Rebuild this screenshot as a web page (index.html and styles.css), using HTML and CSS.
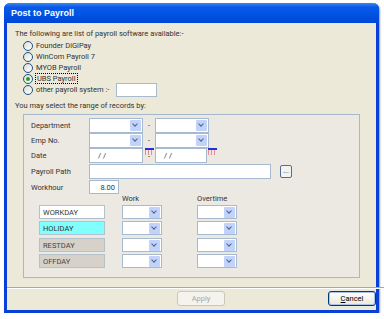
FILE: index.html
```html
<!DOCTYPE html>
<html lang="en">
<head>
  <meta charset="UTF-8" />
  <title>Post to Payroll</title>
  <link rel="stylesheet" href="styles.css">
</head>
<body>
<div class="window">
  <div class="titlebar">Post to Payroll</div>
  <div class="content">
    <div class="line">The following are list of payroll software available:-</div>
    <div class="radios">
      <label class="radio"><span class="dot"></span>Founder DiGiPay</label>
      <label class="radio"><span class="dot"></span>WinCom Payroll 7</label>
      <label class="radio"><span class="dot"></span>MYOB Payroll</label>
      <label class="radio"><span class="dot checked"></span><span class="focus">UBS Payroll</span></label>
      <label class="radio"><span class="dot"></span>other payroll system :-<span class="box other-box"></span></label>
    </div>
    <div class="line range">You may select the range of records by:</div>

    <div class="panel">
      <div class="row r1">
        <span class="lbl">Department</span>
        <span class="combo"><span class="drop"></span></span>
        <span class="dash">-</span>
        <span class="combo"><span class="drop"></span></span>
      </div>
      <div class="row r2">
        <span class="lbl">Emp No.</span>
        <span class="combo"><span class="drop"></span></span>
        <span class="dash">-</span>
        <span class="combo"><span class="drop"></span></span>
      </div>
      <div class="row r3">
        <span class="lbl">Date</span>
        <span class="box date">/ /</span>
        <span class="dash cal-dash"><span class="cal"></span>-</span>
        <span class="box date date2">/ /</span>
        <span class="cal"></span>
      </div>
      <div class="row r4">
        <span class="lbl">Payroll Path</span>
        <span class="box path"></span>
        <span class="browse">...</span>
      </div>
      <div class="row r5">
        <span class="lbl">Workhour</span>
        <span class="box hours">8.00</span>
      </div>

      <div class="days">
        <span></span><span class="head">Work</span><span class="head">Overtime</span>
        <span class="box day">WORKDAY</span>
        <span class="combo small"><span class="drop"></span></span>
        <span class="combo small"><span class="drop"></span></span>
        <span class="box day holiday">HOLIDAY</span>
        <span class="combo small"><span class="drop"></span></span>
        <span class="combo small"><span class="drop"></span></span>
        <span class="box day grey">RESTDAY</span>
        <span class="combo small"><span class="drop"></span></span>
        <span class="combo small"><span class="drop"></span></span>
        <span class="box day grey">OFFDAY</span>
        <span class="combo small"><span class="drop"></span></span>
        <span class="combo small"><span class="drop"></span></span>
      </div>
    </div>

    <div class="footer">
      <button class="btn apply" disabled>Apply</button>
      <button class="btn cancel"><u>C</u>ancel</button>
    </div>
  </div>
</div>
</body>
</html>
```

FILE: styles.css
```css
body {
  margin: 0;
  background: #fff;
  font-family: Roboto, "Liberation Sans", Arial, sans-serif;
  font-size: 7.5px;
  color: #333;
}
.window {
  margin: 3px 0 0 4px;
  width: 369px;
  height: 307px;
  border: 3px solid #0840d8;
  border-top: none;
  border-radius: 6px 6px 0 0;
  background: #ece9d8;
  box-shadow: 1px 1px 2px #999;
}
.titlebar {
  height: 20px;
  margin: 0 -3px;
  padding-left: 7px;
  line-height: 20px;
  border-radius: 6px 6px 0 0;
  background: linear-gradient(#3a86f4, #0a5ae8 20%, #0052e2 60%, #0046d6);
  color: #fff;
  font-family: "Liberation Sans", Arial, sans-serif;
  font-weight: bold;
  font-size: 9px;
}
.content {
  padding: 5px 0 0 8px;
  display: flex;
  flex-direction: column;
}
.line {
  height: 11px;
  line-height: 11px;
}
.radios {
  margin: 1px 0 0 8px;
  display: flex;
  flex-direction: column;
}
.radio {
  height: 11px;
  display: flex;
  align-items: center;
  gap: 3px;
}
.dot {
  width: 8px;
  height: 8px;
  border: 1px solid #1c5180;
  border-radius: 50%;
  background: linear-gradient(135deg, #dcdcd5, #fff);
  position: relative;
}
.dot.checked::after {
  content: "";
  position: absolute;
  left: 2px;
  top: 2px;
  width: 4px;
  height: 4px;
  border-radius: 50%;
  background: #21a121;
}
.focus {
  outline: 1px dotted #000;
  padding: 0 1px;
}
.box {
  display: inline-block;
  box-sizing: border-box;
  background: #fff;
  border: 1px solid #a7bad0;
  height: 15px;
  line-height: 13px;
  padding: 0 4px;
}
.other-box {
  width: 41px;
  height: 14px;
  margin-left: 4px;
}
.range {
  margin-top: 5px;
}
.panel {
  margin: 3px 0 0 8px;
  width: 337px;
  height: 164px;
  box-sizing: border-box;
  border: 1px solid #a6b8cc;
  background: #ebe9e2;
  padding: 2px 0 0 7px;
}
.row {
  display: flex;
  align-items: center;
  height: 15px;
}
.r1 { height: 16px; }
.r4 { height: 17px; }
.r5 { height: 14px; }
.lbl {
  width: 58px;
}
.combo {
  display: inline-block;
  box-sizing: border-box;
  width: 54px;
  height: 15px;
  background: #fff;
  border: 1px solid #a7bad0;
  position: relative;
}
.drop {
  position: absolute;
  right: 1px;
  top: 1px;
  width: 11px;
  height: 11px;
  border-radius: 1px;
  background: #c2d3fb;
}
.drop::after {
  content: "";
  position: absolute;
  left: 3px;
  top: 2px;
  width: 3px;
  height: 3px;
  border-right: 1.5px solid #4d6185;
  border-bottom: 1.5px solid #4d6185;
  transform: rotate(45deg);
}
.dash {
  width: 12px;
  text-align: center;
}
.cal-dash {
  position: relative;
  align-self: stretch;
  line-height: 17px;
}
.cal-dash .cal {
  position: absolute;
  left: 1px;
  top: 0;
}
.date {
  width: 54px;
  padding-left: 8px;
}
.date2 {
  width: 52px;
}
.cal {
  align-self: flex-start;
  width: 9px;
  height: 7px;
  box-sizing: border-box;
  border-top: 2px solid #2332d8;
  background: repeating-linear-gradient(90deg, #e09090 0 1px, #f4e4e4 1px 3px);
  margin-left: 1px;
}
.path {
  width: 182px;
}
.browse {
  margin-left: 9px;
  width: 12px;
  height: 13px;
  box-sizing: border-box;
  border: 1px solid #4f6e94;
  border-radius: 2px;
  background: #f4f3ee;
  text-align: center;
  line-height: 10px;
  font-size: 7px;
}
.hours {
  width: 30px;
  height: 14px;
  text-align: right;
  padding-right: 3px;
}
.days {
  display: grid;
  grid-template-columns: 83px 75px 40px;
  grid-template-rows: 8px repeat(4, 14px);
  row-gap: 2.5px;
  margin: 0 0 0 8px;
}
.head {
  line-height: 10px;
}
.day {
  width: 66px;
  height: 14px;
  padding-left: 3px;
  border-color: #b4c0cc;
}
.holiday {
  background: #80ffff;
}
.grey {
  background: #d6d2ca;
  color: #444;
}
.combo.small {
  width: 40px;
  height: 14px;
}
.footer {
  margin: 9px -8px 0 -8px;
  border-top: 1px solid #aca899;
  box-shadow: inset 0 1px 0 #fff;
  display: flex;
  align-items: center;
  justify-content: flex-end;
  padding: 3px 8px 0 0;
  gap: 103px;
}
.btn {
  font-family: inherit;
  font-size: 7.5px;
  width: 48px;
  height: 15px;
  padding: 0;
  border-radius: 3px;
  border: 1px solid #003c74;
  box-shadow: inset 0 0 0 1px #a8c4ec;
  background: linear-gradient(#fff, #ece9d8);
  color: #000;
}
.apply {
  border-color: #c9c7ba;
  box-shadow: none;
  color: #aca899;
  background: #f4f3ee;
}
```
